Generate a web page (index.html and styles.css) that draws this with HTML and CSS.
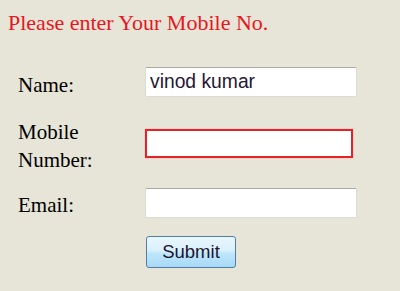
FILE: index.html
```html
<!DOCTYPE html>
<html>
<head>
<meta charset="utf-8">
<link rel="stylesheet" href="styles.css">
</head>
<body>
<div class="title">Please enter Your Mobile No.</div>
<form class="form">
  <div class="row row-name">
    <label class="label">Name:</label>
    <input class="field" type="text" value="vinod kumar">
  </div>
  <div class="row row-mobile">
    <label class="label">Mobile Number:</label>
    <input class="field field-error" type="text">
  </div>
  <div class="row row-email">
    <label class="label">Email:</label>
    <input class="field" type="text">
  </div>
  <div class="row row-submit">
    <button class="submit" type="button">Submit</button>
  </div>
</form>
</body>
</html>
```
FILE: styles.css
```css
html, body {
  margin: 0;
  background: #e6e5d8;
}
body {
  padding: 10.5px 8px 0 8px;
  font-family: "Liberation Serif", "Times New Roman", serif;
  color: #000;
}
.title {
  font-size: 22px;
  line-height: 24.5px;
  color: #e8161d;
}
.form {
  margin: 30.75px 0 0 0;
  padding-left: 10px;
}
.row {
  display: flex;
  align-items: center;
}
.row-mobile { margin-top: 14.2px; }
.row-email { margin-top: 12.1px; }
.row-submit { margin-top: 17px; }
.label {
  width: 127px;
  flex: none;
  font-size: 21px;
  line-height: 28px;
  padding-top: 5px;
}
.field {
  box-sizing: border-box;
  width: 212px;
  height: 30px;
  margin: 0;
  padding: 0 4px;
  background: #fff;
  border: 1px solid #dcdcd4;
  border-top-color: #a9a9a9;
  border-radius: 2px;
  font-family: "Liberation Sans", Arial, sans-serif;
  font-size: 19.3px;
  color: #241634;
  outline: none;
}
.field-error {
  width: 208px;
  height: 29px;
  border: 2px solid #e0242a;
  border-radius: 0;
  box-shadow: 0 0 0 1px #f6d2c8;
}
.submit {
  margin-left: 128px;
  box-sizing: border-box;
  width: 90px;
  height: 32px;
  padding: 0;
  border: 1px solid #4f7fa8;
  border-radius: 3px;
  background: linear-gradient(#eaf6fd 0%, #d9f0fc 45%, #bee6fd 55%, #a7d9f5 100%);
  font-family: "Liberation Sans", Arial, sans-serif;
  font-size: 18.5px;
  color: #1e1530;
}
```
